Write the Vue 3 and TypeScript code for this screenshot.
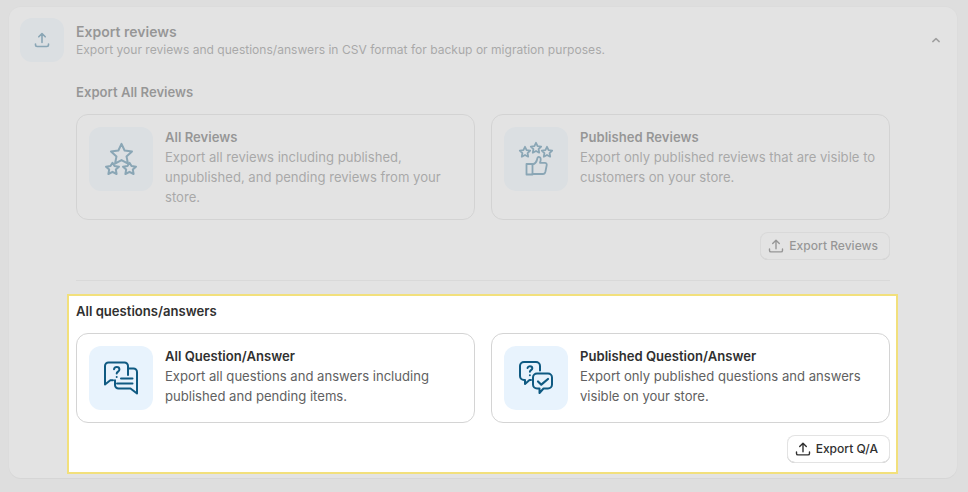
<script setup lang="ts">
interface Option {
  title: string
  text: string
  icon: 'stars' | 'thumb' | 'qa' | 'check'
}
const reviewOptions: Option[] = [
  { title: 'All Reviews', text: 'Export all reviews including published, unpublished, and pending reviews from your store.', icon: 'stars' },
  { title: 'Published Reviews', text: 'Export only published reviews that are visible to customers on your store.', icon: 'thumb' },
]
const qaOptions: Option[] = [
  { title: 'All Question/Answer', text: 'Export all questions and answers including published and pending items.', icon: 'qa' },
  { title: 'Published Question/Answer', text: 'Export only published questions and answers visible on your store.', icon: 'check' },
]
const star = 'M0-5.200 1.600-1.900 5.200-1.400 2.600 1.100 3.200 4.700 0 3-3.200 4.700-2.600 1.100-5.200-1.400-1.600-1.900Z'
const upload = 'M8 10.800V2.500M4.700 5.600 8 2.200l3.300 3.400M1.500 11v1.400c0 .9.700 1.500 1.500 1.500h10c.8 0 1.500-.6 1.500-1.500V11'
</script>

<template>
  <div class="page">
    <section class="panel">
      <header class="head">
        <div class="tile small">
          <svg width="20" height="20" viewBox="0 0 20 20" fill="none" class="ico" stroke-width="1.600" stroke-linecap="round" stroke-linejoin="round">
            <path d="M10 12.500V4M6.800 6.800 10 3.500l3.200 3.300M3.500 14v.8c0 1 .8 1.700 1.800 1.700h9.400c1 0 1.800-.7 1.800-1.700V14" />
          </svg>
        </div>
        <div class="head-text">
          <div class="head-title">Export reviews</div>
          <div class="head-sub">Export your reviews and questions/answers in CSV format for backup or migration purposes.</div>
        </div>
        <svg class="chev" width="12" height="12" viewBox="0 0 12 12" fill="none" stroke="#4a4a4a" stroke-width="1.500" stroke-linecap="round" stroke-linejoin="round">
          <path d="M2.800 7.600 6 4.600l3.200 3" />
        </svg>
      </header>

      <div class="body">
        <h3 class="sec-title">Export All Reviews</h3>
        <div class="grid">
          <div v-for="o in reviewOptions" :key="o.title" class="card">
            <div class="tile">
              <svg v-if="o.icon === 'stars'" width="36" height="36" viewBox="0 0 36 36" fill="none" class="ico" stroke-width="2" stroke-linejoin="round">
                <path d="M18.500 2.800 21.600 9.500 29 10.400 23.500 15.400 25 22.700 18.500 19.100 12 22.700 13.500 15.400 8 10.400 15.400 9.500Z" />
                <path d="M9.500 21.800 11.500 25 16 25.700 12.800 28.400 13.600 33 9.500 30.800 5.400 33 6.200 28.400 3 25.700 7.500 25Z" />
                <path d="M26.500 21.800 28.500 25 33 25.700 29.800 28.400 30.600 33 26.500 30.800 22.400 33 23.200 28.400 20 25.700 24.500 25Z" />
              </svg>
              <svg v-else width="36" height="36" viewBox="0 0 36 36" fill="none" class="ico" stroke-width="1.800" stroke-linejoin="round" stroke-linecap="round">
                <path :d="star" transform="translate(7 11)" />
                <path :d="star" transform="translate(18 7)" />
                <path :d="star" transform="translate(29 11)" />
                <path d="M8.500 23h6v10.500h-6z" />
                <path d="M14.500 23.500c2.300-.6 4-2.500 4.500-4.800.3-1.500.5-2.800 1.800-2.800 1.500 0 2.200 1.600 1.800 3.600l-.6 2.300h4.800c1.400 0 2.200 1.100 1.900 2.500l-1.300 6.400c-.3 1.300-1.200 2.300-2.500 2.300H14.500" />
              </svg>
            </div>
            <div class="card-text">
              <div class="card-title">{{ o.title }}</div>
              <div class="card-desc">{{ o.text }}</div>
            </div>
          </div>
        </div>
        <div class="actions">
          <button class="btn" type="button">
            <svg width="16" height="16" viewBox="0 0 16 16" fill="none" stroke="#303030" stroke-width="1.400" stroke-linecap="round" stroke-linejoin="round">
              <path :d="upload" />
            </svg>
            Export Reviews
          </button>
        </div>
        <hr class="rule" />

        <div class="spot">
          <h3 class="sec-title">All questions/answers</h3>
          <div class="grid">
            <div v-for="o in qaOptions" :key="o.title" class="card">
              <div class="tile">
                <svg v-if="o.icon === 'qa'" width="36" height="36" viewBox="0 0 36 36" fill="none" class="ico" stroke-width="2" stroke-linejoin="round" stroke-linecap="round">
                  <path d="M25 8.500V6a3.500 3.500 0 0 0-3.500-3.500H5.500A3.500 3.500 0 0 0 2 6v18.500l5.300-4.200H10" />
                  <path d="M25 8.500h5.500A3.500 3.500 0 0 1 34 12v21.500l-6.500-5H15.500a3.500 3.500 0 0 1-3.500-3.500v-4.700" />
                  <path d="M25 8.500v6.500" />
                  <path d="M18 18.500h11.500M14 23.500h15.500" />
                  <path d="M11 9.300c.3-1.500 1.400-2.200 2.700-2.200 1.500 0 2.700 1 2.700 2.400 0 2.100-2.700 2.200-2.700 4.100" />
                  <path d="M13.700 17v.1" />
                </svg>
                <svg v-else width="36" height="36" viewBox="0 0 36 36" fill="none" class="ico" stroke-width="2" stroke-linejoin="round" stroke-linecap="round">
                  <path d="M22 10.500V6a4 4 0 0 0-4-4H6a4 4 0 0 0-4 4v10a4 4 0 0 0 4 4h1v4l4.500-4H13" />
                  <path d="M19 13.500h11a4 4 0 0 1 4 4v7a4 4 0 0 1-4 4h-4.500L21.500 33v-4.500H19a4 4 0 0 1-4-4v-7a4 4 0 0 1 4-4z" />
                  <path d="M20 21.500l3.300 3.200L30 19" stroke-width="2.200" />
                  <path d="M9.500 8c.3-1.200 1.200-1.800 2.400-1.800 1.400 0 2.400.9 2.400 2.100 0 1.800-2.400 1.900-2.400 3.500" />
                  <path d="M11.900 15.200v.1" />
                </svg>
              </div>
              <div class="card-text">
                <div class="card-title">{{ o.title }}</div>
                <div class="card-desc">{{ o.text }}</div>
              </div>
            </div>
          </div>
          <div class="actions">
            <button class="btn" type="button">
              <svg width="16" height="16" viewBox="0 0 16 16" fill="none" stroke="#303030" stroke-width="1.400" stroke-linecap="round" stroke-linejoin="round">
                <path :d="upload" />
              </svg>
              Export Q/A
            </button>
          </div>
        </div>
      </div>
    </section>
  </div>
</template>

<style scoped>
.page {
  box-sizing: border-box;
  width: 968px;
  height: 492px;
  padding: 7px 11px 14px 9px;
  background: #f1f1f1;
  overflow: hidden;
  font-family: Inter, "Liberation Sans", sans-serif;
  color: #303030;
}
.panel {
  box-sizing: border-box;
  height: 471px;
  background: #fff;
  border-radius: 12px;
  padding: 11px 12px 0 11px;
  box-shadow: 0 1px 0 rgba(0, 0, 0, 0.07), 0 0 0 1px rgba(0, 0, 0, 0.02);
}
.head {
  display: flex;
  align-items: center;
  gap: 12px;
}
.tile {
  flex: 0 0 64px;
  width: 64px;
  height: 64px;
  border-radius: 12px;
  background: #e8f3fd;
  display: flex;
  align-items: center;
  justify-content: center;
}
.tile.small {
  flex-basis: 44px;
  width: 44px;
  height: 44px;
}
.ico {
  stroke: #0f5a82;
}
.head-text {
  flex: 1;
  padding-top: 1px;
}
.head-title {
  font-size: 14px;
  line-height: 20px;
  font-weight: 600;
}
.head-sub {
  font-size: 12.07px;
  line-height: 18px;
  color: #616161;
  margin-top: -1px;
}
.chev {
  margin-right: 3px;
}
.body {
  margin: 20px 0 0 56px;
  width: 814px;
}
.sec-title {
  margin: 0;
  font-size: 13.1px;
  line-height: 20px;
  font-weight: 600;
}
.grid {
  display: grid;
  grid-template-columns: 1fr 1fr;
  gap: 16px;
  margin-top: 12px;
}
.card {
  display: flex;
  gap: 12px;
  padding: 12px;
  border: 1px solid #d4d4d4;
  border-radius: 12px;
  background: #fff;
}
.card-title {
  font-size: 13.1px;
  line-height: 20px;
  font-weight: 600;
}
.card-desc {
  font-size: 13.1px;
  line-height: 20px;
  color: #616161;
}
.actions {
  display: flex;
  justify-content: flex-end;
  margin-top: 12px;
}
.btn {
  display: inline-flex;
  align-items: center;
  gap: 5px;
  box-sizing: border-box;
  height: 28px;
  padding: 0 12px 1px 8px;
  border: 0;
  border-radius: 8px;
  background: #fff;
  box-shadow: inset 0 0 0 1px #e3e3e3, inset 0 -1px 0 #b5b5b5;
  font-family: inherit;
  font-size: 12.05px;
  font-weight: 500;
  color: #303030;
}
.rule {
  margin: 20px 0 13px;
  border: 0;
  border-top: 1px solid #e3e3e3;
}
.spot {
  position: relative;
  z-index: 2;
  margin: 0 -8px 0 -9px;
  padding: 5px 6px 9px 7px;
  border: 2px solid #f2e07c;
  background: #fff;
  box-shadow: 0 0 0 2000px rgba(211, 211, 211, 0.63);
}
</style>
